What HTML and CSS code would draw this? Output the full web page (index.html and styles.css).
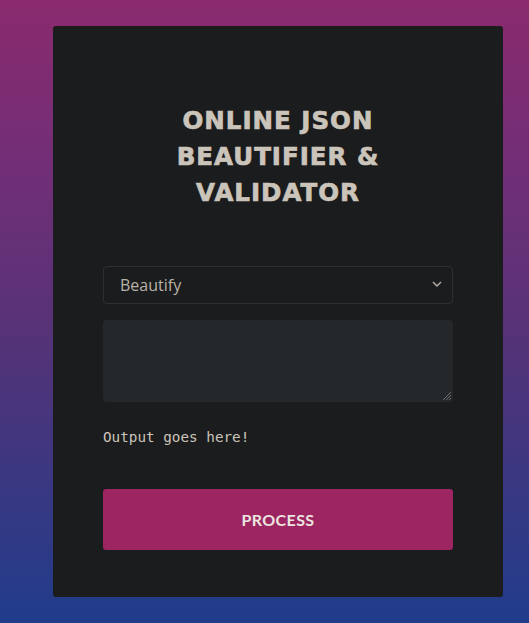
FILE: index.html
```html
<!DOCTYPE html>
<html>
<head>
<meta charset="utf-8">
<link rel="stylesheet" href="styles.css">
</head>
<body>
<main class="card">
  <h1 class="title">ONLINE JSON<br>BEAUTIFIER &amp;<br>VALIDATOR</h1>
  <div class="select">
    <span class="select-text">Beautify</span>
    <svg class="chevron" width="10" height="6" viewBox="0 0 10 6"><path d="M1 1l4 4 4-4" fill="none" stroke="#b9b2a8" stroke-width="1.4"/></svg>
  </div>
  <div class="textarea">
    <svg class="grip" width="10" height="10" viewBox="0 0 10 10"><path d="M9 1L1 9M9 4L4 9M9 7L7 9" stroke="#6a6d70" stroke-width="1"/></svg>
  </div>
  <pre class="output">Output goes here!</pre>
  <button class="btn">PROCESS</button>
</main>
</body>
</html>
```
FILE: styles.css
```css
html, body {
  margin: 0;
  padding: 0;
}
body {
  width: 529px;
  height: 623px;
  background: linear-gradient(180deg, #8b2a6e 0%, #6e2f78 30%, #5a3276 50%, #203c8b 100%);
  overflow: hidden;
  padding-top: 26px;
  box-sizing: border-box;
}
.card {
  margin-left: 53px;
  width: 450px;
  height: 571px;
  box-sizing: border-box;
  background: #1b1c1e;
  border-radius: 3px;
  padding: 77px 50px 0;
  display: flex;
  flex-direction: column;
}
.title {
  margin: 0 0 55px;
  font-family: "DejaVu Sans", sans-serif;
  font-weight: 700;
  font-size: 24.5px;
  letter-spacing: 1px;
  line-height: 36px;
  -webkit-text-stroke: 0.7px #cbc4ba;
  color: #cbc4ba;
  text-align: center;
}
.select {
  height: 38px;
  box-sizing: border-box;
  border: 1px solid #2d2f32;
  border-radius: 4px;
  display: flex;
  align-items: center;
  justify-content: space-between;
  padding: 0 10px 0 16px;
}
.select-text {
  font-family: "Open Sans", sans-serif;
  font-size: 16px;
  color: #b9b2a8;
}
.chevron {
  margin-top: -2px;
}
.textarea {
  margin-top: 16px;
  height: 82px;
  background: #24282b;
  border-radius: 4px;
  position: relative;
}
.grip {
  position: absolute;
  right: 1px;
  bottom: 1px;
}
.output {
  margin: 25px 0 0;
  font-family: "DejaVu Sans Mono", monospace;
  font-size: 14.3px;
  line-height: 20px;
  color: #cbc4ba;
}
.btn {
  margin-top: 42px;
  height: 61px;
  border: none;
  border-radius: 3px;
  background: #9c2562;
  color: #ece6e0;
  font-family: "Lato", sans-serif;
  font-weight: 700;
  font-size: 16px;
  letter-spacing: 0.4px;
}
```
